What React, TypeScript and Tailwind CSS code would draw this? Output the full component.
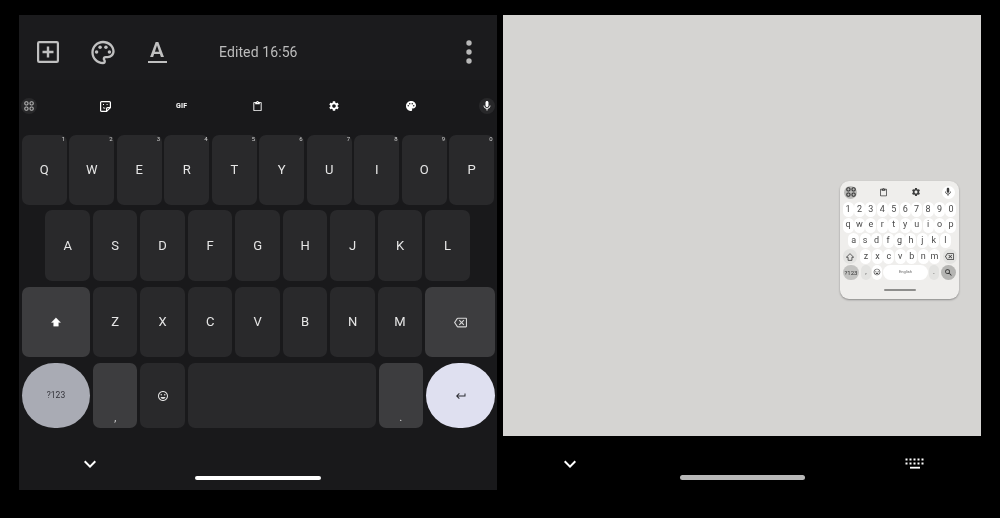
import React from 'react';
import {
  MdOutlinePalette,
  MdPalette,
  MdSettings,
  MdMic,
  MdKeyboardArrowDown,
  MdContentPaste,
  MdOutlineBackspace,
  MdKeyboardReturn,
  MdOutlineEmojiEmotions,
  MdSearch,
} from 'react-icons/md';

const row1 = ['Q', 'W', 'E', 'R', 'T', 'Y', 'U', 'I', 'O', 'P'];
const row2 = ['A', 'S', 'D', 'F', 'G', 'H', 'J', 'K', 'L'];
const row3 = ['Z', 'X', 'C', 'V', 'B', 'N', 'M'];
const hints = ['1', '2', '3', '4', '5', '6', '7', '8', '9', '0'];

const AddBoxIcon = () => (
  <svg width="22" height="22" viewBox="0 0 22 22" fill="none" stroke="#c0c0c0" strokeWidth="2.2">
    <rect x="1.1" y="1.1" width="19.8" height="19.8" rx="1.2" />
    <path d="M11 5.5v11M5.5 11h11" strokeWidth="2.4" />
  </svg>
);

const MoreIcon = () => (
  <svg width="6" height="24" viewBox="0 0 6 24" fill="#b8b8b8">
    <circle cx="3" cy="3" r="2.7" />
    <circle cx="3" cy="12" r="2.7" />
    <circle cx="3" cy="21" r="2.7" />
  </svg>
);

const StickerIcon = () => (
  <svg width="11" height="11" viewBox="0 0 11 11" fill="none" stroke="#ffffff" strokeWidth="1.2">
    <path d="M1.6 0.6H9.4Q10.4 0.6 10.4 1.6V6.6L6.6 10.4H1.6Q0.6 10.4 0.6 9.4V1.6Q0.6 0.6 1.6 0.6Z" strokeLinejoin="round" />
    <path d="M10.2 6.6H7.6Q6.6 6.6 6.6 7.6V10.2" />
    <path d="M3 6.6Q4 7.4 5.2 7.2" strokeWidth="0.9" />
    <rect x="3" y="3" width="1" height="1" fill="#ffffff" stroke="none" />
    <rect x="6.6" y="3" width="1" height="1" fill="#ffffff" stroke="none" />
  </svg>
);

const GridIcon = ({ color = '#b5b5b5' }: { color?: string }) => (
  <svg width="10" height="10" viewBox="0 0 10 10" fill="none" stroke={color} strokeWidth="1.1">
    <rect x="0.8" y="0.8" width="3.2" height="3.2" rx="1.2" />
    <rect x="6" y="0.8" width="3.2" height="3.2" rx="1.2" />
    <rect x="0.8" y="6" width="3.2" height="3.2" rx="1.2" />
    <rect x="6" y="6" width="3.2" height="3.2" rx="1.2" />
  </svg>
);

const ShiftIcon = ({ filled = true, color = '#ffffff', size = 10 }: { filled?: boolean; color?: string; size?: number }) => (
  <svg width={size} height={size} viewBox="0 0 10 10">
    <path
      d="M5 0.8 9.6 5.4H7.4V9.2H2.6V5.4H0.4Z"
      fill={filled ? color : 'none'}
      stroke={color}
      strokeWidth={filled ? 0.3 : 1}
      strokeLinejoin="round"
    />
  </svg>
);

const KeyboardHideIcon = () => (
  <svg width="20" height="13" viewBox="0 0 20 13" fill="#ffffff">
    {[0, 1, 2, 3, 4].map((i) => (
      <React.Fragment key={i}>
        <rect x={0.5 + i * 4} y="0.5" width="2" height="2" />
        <rect x={0.5 + i * 4} y="4.5" width="2" height="2" />
      </React.Fragment>
    ))}
    <rect x="5" y="8.8" width="10" height="1.8" />
  </svg>
);

const Key = ({ label, hint }: { label: string; hint?: string }) => (
  <div className="relative flex h-full w-[44.7px] shrink-0 items-center justify-center rounded-[7px] bg-[#29292b] text-[13px] text-[#e6e6e6]">
    {hint && <span className="absolute right-[1.5px] top-0 text-[6px] leading-[8px] text-[#d0d0d0]">{hint}</span>}
    {label}
  </div>
);

const MiniKey = ({ label }: { label: string }) => (
  <div className="flex h-[15px] w-[11px] shrink-0 items-center justify-center rounded-full bg-white text-[9px] text-[#4a4a4a]">
    {label}
  </div>
);

const MiniKeyboard = () => (
  <div className="flex h-[118px] w-[119px] flex-col rounded-[9px] bg-[#efeeec] shadow-[0_1px_2px_rgba(0,0,0,0.35)] blur-[0.3px]">
    <div className="flex h-[21px] items-center justify-between px-[4px] pt-[1px] text-[#3c3c3c]">
      <div className="flex h-[13px] w-[13px] items-center justify-center rounded-full bg-[#b9b9b7]">
        <GridIcon color="#333333" />
      </div>
      <div className="flex w-[13px] justify-center">
        <MdContentPaste size={9} />
      </div>
      <div className="flex w-[13px] justify-center">
        <MdSettings size={10} />
      </div>
      <div className="flex h-[13px] w-[13px] items-center justify-center rounded-full bg-white">
        <MdMic size={10} />
      </div>
    </div>
    <div className="flex flex-col gap-[0.7px] px-[2.5px]">
      <div className="flex justify-between">
        {hints.map((k) => (
          <MiniKey key={k} label={k} />
        ))}
      </div>
      <div className="flex justify-between">
        {row1.map((k) => (
          <MiniKey key={k} label={k.toLowerCase()} />
        ))}
      </div>
      <div className="flex justify-center gap-[0.45px]">
        {row2.map((k) => (
          <MiniKey key={k} label={k.toLowerCase()} />
        ))}
      </div>
      <div className="flex items-center gap-[0.45px] pl-[0.5px]">
        <div className="mr-[3px] flex h-[15px] w-[15px] items-center justify-center rounded-full bg-[#e3e3e1]">
          <ShiftIcon filled={false} color="#3c3c3c" size={8} />
        </div>
        {row3.map((k) => (
          <MiniKey key={k} label={k.toLowerCase()} />
        ))}
        <div className="ml-[2px] flex h-[15px] w-[15px] items-center justify-center rounded-full bg-[#e3e3e1] text-[#3c3c3c]">
          <MdOutlineBackspace size={9} />
        </div>
      </div>
      <div className="flex items-center gap-[1px] pl-[0.5px]">
        <div className="flex h-[15px] w-[16px] items-center justify-center rounded-full bg-[#c3c3c1] text-[6px] text-[#333333]">?123</div>
        <div className="ml-[1px] flex h-[15px] w-[10px] items-center justify-center rounded-full bg-[#e3e3e1] text-[7px] text-[#4a4a4a]">,</div>
        <div className="flex h-[15px] w-[10px] items-center justify-center rounded-full bg-white text-[#3c3c3c]">
          <MdOutlineEmojiEmotions size={8} />
        </div>
        <div className="flex h-[15px] w-[45px] items-center justify-center rounded-full bg-white text-[4px] text-[#666666]">English</div>
        <div className="flex h-[15px] w-[10px] items-center justify-center rounded-full bg-[#e3e3e1] text-[7px] text-[#4a4a4a]">.</div>
        <div className="ml-[1px] flex h-[15px] w-[15px] items-center justify-center rounded-full bg-[#b5b5b3] text-[#222222]">
          <MdSearch size={9} />
        </div>
      </div>
    </div>
    <div className="flex justify-center pt-[9px]">
      <div className="h-[2px] w-[32px] rounded-full bg-[#8e8e8c]" />
    </div>
  </div>
);

export default function App() {
  return (
    <div className="flex h-[518px] w-[1000px] gap-[6px] overflow-hidden bg-black pl-[19px] pt-[15px] font-['Roboto',sans-serif] blur-[0.35px]">
      {/* dark phone half */}
      <div className="flex h-[475px] w-[478px] flex-col bg-[#19191b]">
        <div className="flex h-[65px] items-center bg-[#1b1b1d] pl-[18px] pr-[25px] pt-[9px]">
          <AddBoxIcon />
          <div className="ml-[30px] flex w-[28px] justify-center text-[#c0c0c0]">
            <MdOutlinePalette size={29} />
          </div>
          <div className="ml-[30px] flex w-[20px] flex-col items-center">
            <span className="text-[21px] font-semibold leading-[18px] text-[#c0c0c0]">A</span>
            <div className="mt-[2px] h-[2px] w-[19px] bg-[#c0c0c0]" />
          </div>
          <span className="ml-[52px] text-[14px] tracking-[0.1px] text-[#bdbdbd]">Edited 16:56</span>
          <div className="ml-auto flex">
            <MoreIcon />
          </div>
        </div>

        <div className="flex h-[55px] items-center justify-between px-[2px] pb-[3px] text-white">
          <div className="flex h-[16px] w-[16px] items-center justify-center rounded-full bg-[#28282a]">
            <GridIcon />
          </div>
          <div className="flex w-[16px] justify-center">
            <StickerIcon />
          </div>
          <div className="flex w-[16px] justify-center text-[7px] font-bold tracking-[0.3px] text-white">GIF</div>
          <div className="flex w-[16px] justify-center">
            <MdContentPaste size={11} />
          </div>
          <div className="flex w-[16px] justify-center">
            <MdSettings size={12} />
          </div>
          <div className="flex w-[16px] justify-center">
            <MdPalette size={12} />
          </div>
          <div className="flex h-[16px] w-[16px] items-center justify-center rounded-full bg-[#28282a]">
            <MdMic size={12} />
          </div>
        </div>

        <div className="flex flex-col gap-[5px] pl-[3px] pr-[2px]">
          <div className="flex h-[70px] gap-[2.8px]">
            {row1.map((k, i) => (
              <Key key={k} label={k} hint={hints[i]} />
            ))}
          </div>
          <div className="flex h-[71px] gap-[2.8px] pl-[23.3px]">
            {row2.map((k) => (
              <Key key={k} label={k} />
            ))}
          </div>
          <div className="mt-[1px] flex h-[70px] gap-[2.8px]">
            <div className="flex w-[68px] shrink-0 items-center justify-center rounded-[7px] bg-[#3d3d3f]">
              <ShiftIcon />
            </div>
            {row3.map((k) => (
              <Key key={k} label={k} />
            ))}
            <div className="flex flex-1 items-center justify-center rounded-[7px] bg-[#3d3d3f] text-[#d8d8d8]">
              <MdOutlineBackspace size={13} />
            </div>
          </div>
          <div className="mt-[1px] flex h-[65px] gap-[2.8px]">
            <div className="flex w-[68px] shrink-0 items-center justify-center rounded-full bg-[#a9abb4] text-[8.5px] text-[#33333a]">?123</div>
            <div className="flex w-[44.7px] shrink-0 items-end justify-center rounded-[7px] bg-[#3d3d3f] pb-[5px] text-[10px] leading-[10px] text-[#e0e0e0]">,</div>
            <div className="flex w-[44.7px] shrink-0 items-center justify-center rounded-[7px] bg-[#29292b] text-[#e0e0e0]">
              <MdOutlineEmojiEmotions size={12} />
            </div>
            <div className="flex-1 rounded-[7px] bg-[#29292b]" />
            <div className="flex w-[44.7px] shrink-0 items-end justify-center rounded-[7px] bg-[#3d3d3f] pb-[5px] text-[10px] leading-[10px] text-[#e0e0e0]">.</div>
            <div className="flex w-[69px] shrink-0 items-center justify-center rounded-full bg-[#dfe0f0] text-[#2a2a30]">
              <MdKeyboardReturn size={12} />
            </div>
          </div>
        </div>

        <div className="flex flex-col pt-[24px]">
          <div className="flex pl-[59px] text-white">
            <MdKeyboardArrowDown size={24} />
          </div>
          <div className="flex justify-center">
            <div className="h-[4px] w-[126px] rounded-full bg-white" />
          </div>
        </div>
      </div>

      {/* light phone half */}
      <div className="flex h-[475px] w-[478px] flex-col">
        <div className="flex h-[421px] justify-end bg-[#d5d4d2] pr-[22px] pt-[166px]">
          <MiniKeyboard />
        </div>
        <div className="flex h-[39px] items-start justify-between pl-[55px] pr-[56px] pt-[16px] text-white">
          <MdKeyboardArrowDown size={24} />
          <div className="pt-[6px]">
            <KeyboardHideIcon />
          </div>
        </div>
        <div className="flex justify-center">
          <div className="h-[5px] w-[125px] rounded-full bg-[#b8b8b8]" />
        </div>
      </div>
    </div>
  );
}
